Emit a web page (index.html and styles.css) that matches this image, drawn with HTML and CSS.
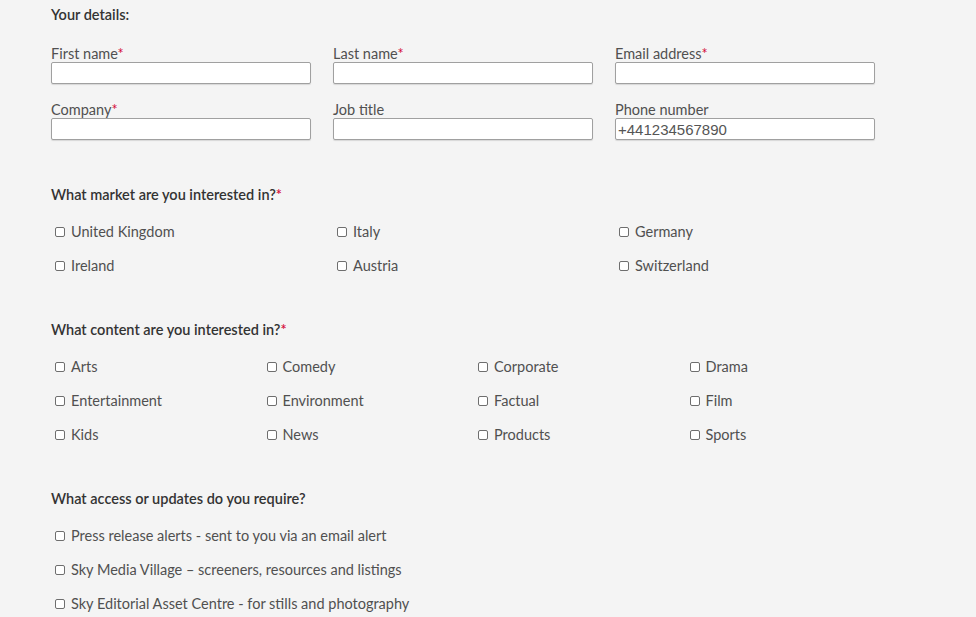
FILE: index.html
```html
<!DOCTYPE html>
<html>
<head>
<meta charset="utf-8">
<link rel="stylesheet" href="styles.css">
</head>
<body>
<form class="form">
  <h2 class="heading heading-top">Your details:</h2>
  <div class="fields">
    <div class="field"><label class="label">First name<span class="req">*</span></label><input class="input" type="text"></div>
    <div class="field"><label class="label">Last name<span class="req">*</span></label><input class="input" type="text"></div>
    <div class="field"><label class="label">Email address<span class="req">*</span></label><input class="input" type="text"></div>
    <div class="field"><label class="label">Company<span class="req">*</span></label><input class="input" type="text"></div>
    <div class="field"><label class="label">Job title</label><input class="input" type="text"></div>
    <div class="field"><label class="label">Phone number</label><input class="input" type="text" value="+441234567890"></div>
  </div>

  <h2 class="heading">What market are you interested in?<span class="req">*</span></h2>
  <div class="checks cols-3">
    <label class="check"><input type="checkbox" class="box">United Kingdom</label>
    <label class="check"><input type="checkbox" class="box">Italy</label>
    <label class="check"><input type="checkbox" class="box">Germany</label>
    <label class="check"><input type="checkbox" class="box">Ireland</label>
    <label class="check"><input type="checkbox" class="box">Austria</label>
    <label class="check"><input type="checkbox" class="box">Switzerland</label>
  </div>

  <h2 class="heading">What content are you interested in?<span class="req">*</span></h2>
  <div class="checks cols-4">
    <label class="check"><input type="checkbox" class="box">Arts</label>
    <label class="check"><input type="checkbox" class="box">Comedy</label>
    <label class="check"><input type="checkbox" class="box">Corporate</label>
    <label class="check"><input type="checkbox" class="box">Drama</label>
    <label class="check"><input type="checkbox" class="box">Entertainment</label>
    <label class="check"><input type="checkbox" class="box">Environment</label>
    <label class="check"><input type="checkbox" class="box">Factual</label>
    <label class="check"><input type="checkbox" class="box">Film</label>
    <label class="check"><input type="checkbox" class="box">Kids</label>
    <label class="check"><input type="checkbox" class="box">News</label>
    <label class="check"><input type="checkbox" class="box">Products</label>
    <label class="check"><input type="checkbox" class="box">Sports</label>
  </div>

  <h2 class="heading">What access or updates do you require?</h2>
  <div class="checks cols-1">
    <label class="check"><input type="checkbox" class="box">Press release alerts - sent to you via an email alert</label>
    <label class="check"><input type="checkbox" class="box">Sky Media Village – screeners, resources and listings</label>
    <label class="check"><input type="checkbox" class="box">Sky Editorial Asset Centre - for stills and photography</label>
  </div>
</form>
</body>
</html>
```

FILE: styles.css
```css
html, body {
  margin: 0;
  padding: 0;
  background: #f4f4f4;
}
body {
  font-family: Lato, "Open Sans", "Liberation Sans", sans-serif;
  font-size: 14.5px;
  color: #505050;
}
.form {
  width: 846px;
  padding: 0 0 0 51px;
}
.heading {
  margin: 0;
  font-size: 14.5px;
  font-weight: 600;
  color: #333;
  line-height: 18px;
}
.heading-top {
  padding-top: 6px;
}
.req {
  color: #d40f3c;
}
.fields {
  display: grid;
  grid-template-columns: repeat(3, 260px);
  column-gap: 22px;
  row-gap: 18px;
  margin-top: 22px;
  margin-bottom: 46px;
}
.field {
  display: flex;
  flex-direction: column;
}
.label {
  line-height: 16px;
  height: 16px;
  color: #505050;
}
.input {
  box-sizing: border-box;
  width: 260px;
  height: 22px;
  margin: 0;
  border: 1px solid #a0a0a0;
  border-radius: 2px;
  background: #fff;
  box-shadow: 0 1px 1px rgba(0,0,0,0.12);
  padding: 0 2px;
  font-family: "Liberation Sans", Arial, sans-serif;
  font-size: 15px;
  color: #555;
}
.checks {
  display: grid;
  row-gap: 16px;
  margin-top: 19px;
  margin-bottom: 46px;
}
.cols-3 { grid-template-columns: repeat(3, 282px); }
.cols-4 { grid-template-columns: repeat(4, 211.5px); }
.cols-1 { grid-template-columns: 1fr; margin-bottom: 0; }
.check {
  display: flex;
  align-items: center;
  height: 18px;
  line-height: 18px;
  padding-left: 4px;
  white-space: nowrap;
}
.box {
  appearance: none;
  -webkit-appearance: none;
  box-sizing: border-box;
  width: 10px;
  height: 10px;
  margin: 0 6px 0 0;
  border: 1px solid #6e6e6e;
  border-radius: 2px;
  background: #fff;
  flex: none;
}
```
